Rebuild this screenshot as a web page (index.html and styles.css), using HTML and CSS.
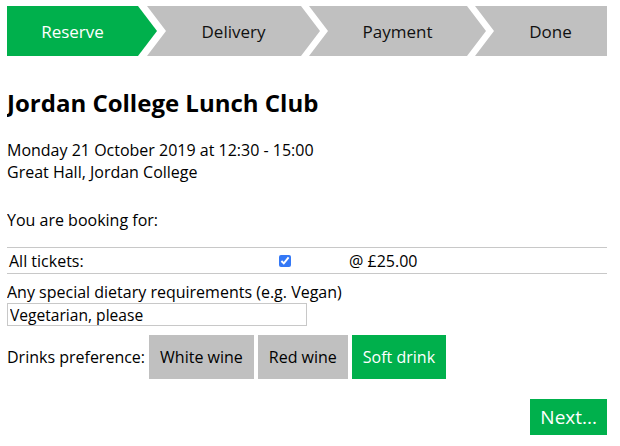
FILE: index.html
```html
<!DOCTYPE html>
<html>
<head>
<meta charset="utf-8">
<link rel="stylesheet" href="styles.css">
</head>
<body>
<nav class="steps">
  <div class="step step-first active"><span>Reserve</span></div>
  <div class="step step-delivery"><span>Delivery</span></div>
  <div class="step step-payment"><span>Payment</span></div>
  <div class="step step-last"><span>Done</span></div>
</nav>
<h1 class="title">Jordan College Lunch Club</h1>
<p class="when">Monday 21 October 2019 at 12:30 - 15:00<br>Great Hall, Jordan College</p>
<p class="for">You are booking for:</p>
<div class="ticket-row">
  <span class="ticket-label">All tickets:</span>
  <span class="ticket-check"><input type="checkbox" checked></span>
  <span class="ticket-price">@ £25.00</span>
</div>
<div class="dietary">
  <label class="dietary-label">Any special dietary requirements (e.g. Vegan)</label>
  <input class="dietary-input" type="text" value="Vegetarian, please">
</div>
<div class="drinks">
  <span class="drinks-label">Drinks preference:</span>
  <button class="choice">White wine</button>
  <button class="choice">Red wine</button>
  <button class="choice selected">Soft drink</button>
</div>
<div class="actions">
  <button class="next">Next...</button>
</div>
</body>
</html>
```
FILE: styles.css
```css
body {
  margin: 6px 13px 0 7px;
  font-family: "Open Sans", "DejaVu Sans", sans-serif;
  font-size: 16px;
  color: #000;
  background: #fff;
}
.steps {
  display: flex;
  height: 50px;
}
.step {
  display: flex;
  align-items: center;
  justify-content: center;
  background: #c0c0c0;
  color: #111;
  font-size: 17px;
  box-sizing: border-box;
  padding: 0 19px;
  clip-path: polygon(0 0, calc(100% - 19px) 0, 100% 50%, calc(100% - 19px) 100%, 0 100%, 19px 50%);
}
.step.active {
  background: #00b04c;
  color: #fff;
}
.step-first {
  width: 150px;
  padding-left: 0;
  clip-path: polygon(0 0, calc(100% - 19px) 0, 100% 50%, calc(100% - 19px) 100%, 0 100%);
}
.step-delivery {
  width: 173px;
  margin-left: -10px;
}
.step-payment {
  width: 177px;
  margin-left: -11px;
}
.step-last {
  flex: 1;
  margin-left: -11px;
  padding-right: 0;
  clip-path: polygon(0 0, 100% 0, 100% 100%, 0 100%, 19px 50%);
}
.title {
  font-size: 24px;
  font-weight: 700;
  margin: 30px 0 0;
  line-height: 34px;
}
.when {
  margin: 19px 0 0;
  line-height: 22px;
}
.for {
  margin: 26px 0 0;
  line-height: 22px;
}
.ticket-row {
  margin-top: 16px;
  display: grid;
  grid-template-columns: 270px 70px 1fr;
  align-items: center;
  height: 25px;
  border-top: 1px solid #c8c8c8;
  border-bottom: 1px solid #c8c8c8;
  padding-left: 2px;
}
.ticket-check input {
  margin: 0;
  width: 12px;
  height: 12px;
  accent-color: #3478f6;
}
.dietary {
  margin-top: 7px;
}
.dietary-label {
  display: block;
  line-height: 22px;
}
.dietary-input {
  display: block;
  width: 300px;
  height: 23px;
  box-sizing: border-box;
  border: 1px solid #c8c8c8;
  padding: 0 2px;
  margin: 0;
  font-family: inherit;
  font-size: 15.6px;
  color: #000;
}
.drinks {
  display: flex;
  align-items: center;
  gap: 4px;
  margin-top: 9px;
}
.choice {
  border: 0;
  background: #c0c0c0;
  color: #000;
  font-family: inherit;
  font-size: 16px;
  height: 44px;
  padding: 0 11px;
  margin: 0;
}
.choice.selected {
  background: #00b04c;
  color: #fff;
}
.actions {
  display: flex;
  justify-content: flex-end;
  margin-top: 20px;
}
.next {
  border: 0;
  background: #00b04c;
  color: #fff;
  font-family: inherit;
  font-size: 19px;
  height: 36px;
  padding: 0 10px;
  margin: 0;
}
```
